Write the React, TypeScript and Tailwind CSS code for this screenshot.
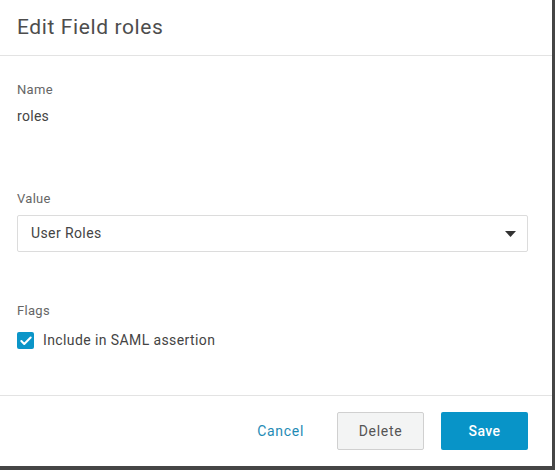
import { Check } from 'lucide-react';

export default function App() {
  return (
    <div className="w-[555px] h-[470px] bg-[#454545] font-['Roboto',sans-serif]">
      <div className="w-[552px] h-[466px] bg-white flex flex-col">
        <div className="h-[56px] border-b border-[#e3e3e3] px-[17px] flex items-center">
          <h1 className="text-[21px] text-[#4d4d4d] font-normal tracking-[0.6px]">Edit Field roles</h1>
        </div>

        <div className="flex-1 px-[17px] pt-[26px] tracking-[0.3px]">
          <p className="text-[13px] text-[#666] leading-[16px]">Name</p>
          <p className="text-[14px] text-[#444] mt-[9px] leading-[18px]">roles</p>

          <p className="text-[13px] text-[#666] leading-[16px] mt-[66px]">Value</p>
          <div className="mt-[8px] w-[511px] h-[37px] border border-[#dcdcdc] rounded-[2px] flex items-center justify-between pl-[13px] pr-[10px]">
            <span className="text-[14px] text-[#444] tracking-[0.4px]">User Roles</span>
            <svg width="11" height="6" viewBox="0 0 11 6" className="mr-[1px]">
              <path d="M0 0h11L5.5 6z" fill="#333" />
            </svg>
          </div>

          <p className="text-[13px] text-[#666] leading-[16px] mt-[51px]">Flags</p>
          <label className="mt-[11px] flex items-center gap-[9px]">
            <span className="w-[17px] h-[17px] rounded-[2px] bg-[#0b95c8] flex items-center justify-center">
              <Check className="w-[14px] h-[14px] text-white" strokeWidth={3.5} />
            </span>
            <span className="text-[14px] text-[#444] tracking-[0.4px]">Include in SAML assertion</span>
          </label>
        </div>

        <div className="h-[71px] border-t border-[#e3e3e3] flex items-center justify-end pr-[24px] gap-[17px]">
          <button className="text-[14px] text-[#1f8bb5] tracking-[0.7px] px-[16px] h-[37px]">Cancel</button>
          <button className="w-[87px] h-[38px] bg-[#f3f4f4] border border-[#d0d0d0] rounded-[2px] text-[14px] text-[#555] tracking-[0.7px]">Delete</button>
          <button className="w-[87px] h-[38px] bg-[#0894c8] rounded-[2px] text-[14px] text-white font-medium tracking-[0.4px]">Save</button>
        </div>
      </div>
    </div>
  );
}
